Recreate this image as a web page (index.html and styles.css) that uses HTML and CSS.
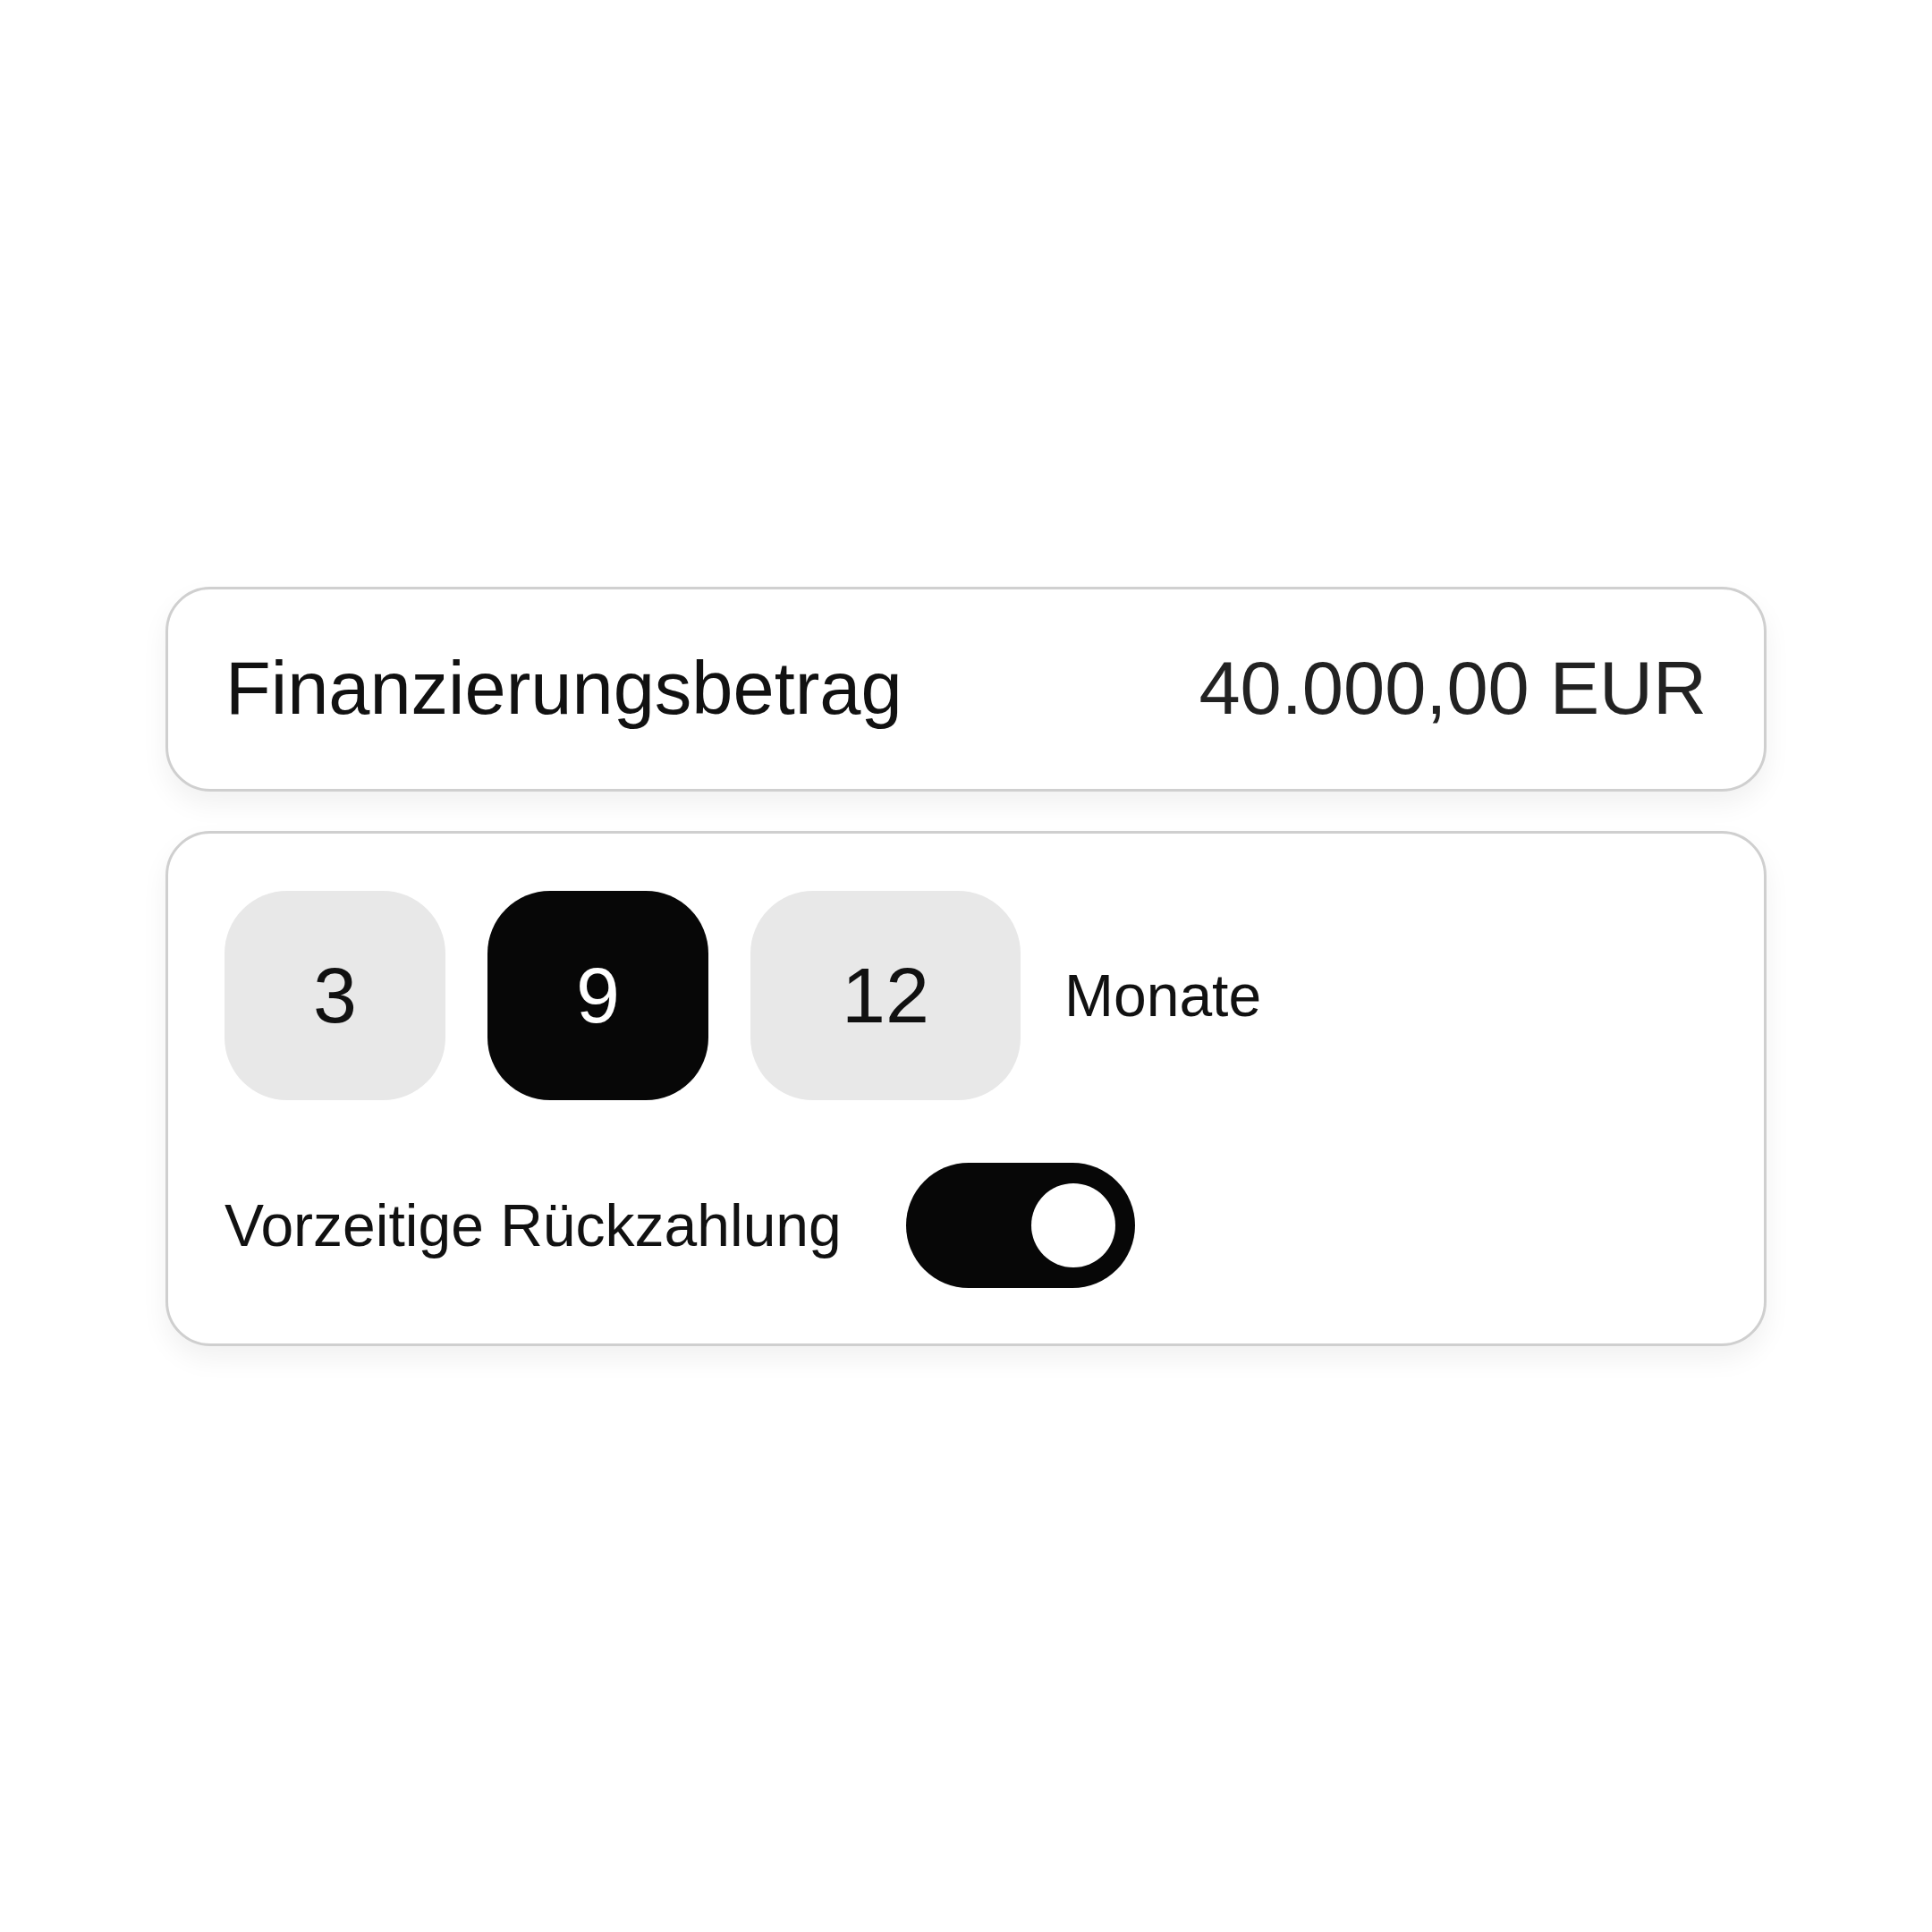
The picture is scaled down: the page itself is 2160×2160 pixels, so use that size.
FILE: index.html
```
<!DOCTYPE html>
<html lang="de">
<head>
    <meta charset="UTF-8">
    <meta name="viewport" content="width=device-width, initial-scale=1.0">
    <title>Finanzierung</title>
    <link rel="stylesheet" href="styles.css">
</head>
<body>
    <div class="wrap">
        <div class="card amount">
            <span class="label">Finanzierungsbetrag</span>
            <span class="value">40.000,00 EUR</span>
        </div>
        <div class="card options">
            <div class="terms">
                <button class="term">3</button>
                <button class="term active">9</button>
                <button class="term wide">12</button>
                <span class="unit">Monate</span>
            </div>
            <div class="early">
                <span class="early-label">Vorzeitige Rückzahlung</span>
                <button class="toggle on"><span class="knob"></span></button>
            </div>
        </div>
    </div>
</body>
</html>
```

FILE: styles.css
```
* {
    margin: 0;
    padding: 0;
    box-sizing: border-box;
}
body {
    background-color: #fff;
    font-family: "Liberation Sans", Arial, sans-serif;
    color: #111;
    min-height: 100vh;
    display: flex;
    justify-content: center;
    align-items: center;
}
.wrap {
    width: 1790px;
    display: flex;
    flex-direction: column;
    gap: 44px;
    margin-top: 0;
}
.card {
    background-color: #fff;
    border: 3px solid #cfcfcf;
    border-radius: 50px;
    box-shadow: 0 14px 30px rgba(0, 0, 0, 0.06);
}
.amount {
    height: 229px;
    padding: 0 64px;
    display: flex;
    justify-content: space-between;
    align-items: center;
    font-size: 83px;
}
.value {
    color: #222;
}
.options {
    padding: 64px 63px 62px;
}
.terms {
    display: flex;
    align-items: center;
    gap: 47px;
}
.term {
    height: 234px;
    width: 247px;
    border: none;
    border-radius: 70px;
    background-color: #e8e8e8;
    color: #111;
    font-family: inherit;
    font-size: 88px;
    display: flex;
    justify-content: center;
    align-items: center;
}
.term.wide {
    width: 302px;
}
.term.active {
    background-color: #070707;
    color: #fff;
}
.unit {
    font-size: 66px;
    margin-left: 2px;
}
.early {
    margin-top: 70px;
    display: flex;
    align-items: center;
    gap: 72px;
}
.early-label {
    font-size: 66px;
}
.toggle {
    width: 256px;
    height: 140px;
    border: none;
    border-radius: 70px;
    background-color: #070707;
    display: flex;
    align-items: center;
    justify-content: flex-end;
    padding: 0 22px;
}
.knob {
    width: 94px;
    height: 94px;
    border-radius: 50%;
    background-color: #fff;
}
```
